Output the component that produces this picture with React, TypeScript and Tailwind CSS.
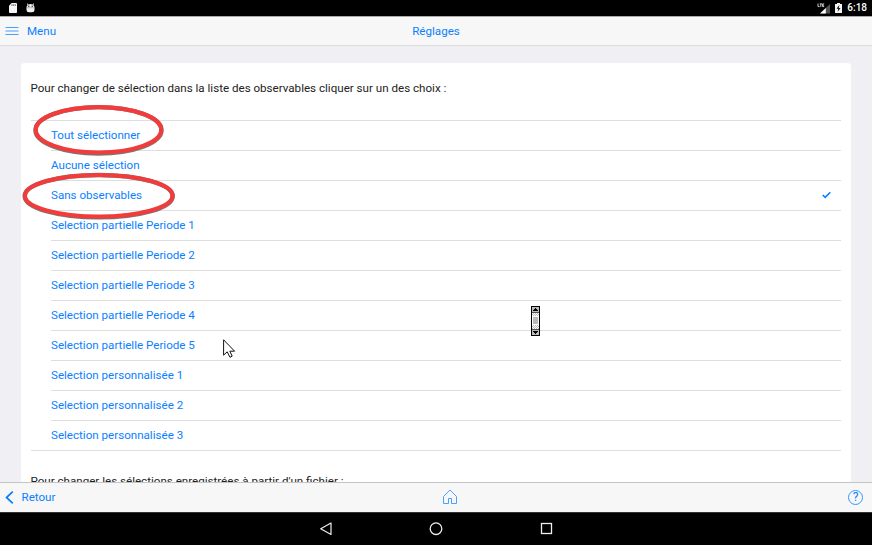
const choices = [
  'Tout sélectionner',
  'Aucune sélection',
  'Sans observables',
  'Selection partielle Periode 1',
  'Selection partielle Periode 2',
  'Selection partielle Periode 3',
  'Selection partielle Periode 4',
  'Selection partielle Periode 5',
  'Selection personnalisée 1',
  'Selection personnalisée 2',
  'Selection personnalisée 3',
];

function StatusBar() {
  return (
    <div className="flex h-4 shrink-0 items-center justify-between bg-black pr-[5px] pl-[9px] text-white">
      <div className="flex items-center gap-[9px]">
        <svg width="8" height="10" viewBox="0 0 8 10">
          <path d="M2.6 0H7.2Q8 0 8 .8V9.2Q8 10 7.2 10H.8Q0 10 0 9.2V2.7Z" fill="#f5f5f5" />
          <path d="M3 1.2V3M4.7 1.2V3M6.3 1.2V3" stroke="#555" strokeWidth=".8" />
        </svg>
        <svg width="9" height="10" viewBox="0 0 9 10">
          <path d="M1 0L2.5 1.5Q4.5.7 6.5 1.5L8 0L7.5 2.3Q8.5 3 8.5 4.5V7Q8.5 9.3 6 9.3H3Q.5 9.3 .5 7V4.5Q.5 3 1.5 2.3Z" fill="#eee" />
          <path d="M.5 4.7H8.5" stroke="#999" strokeWidth=".6" />
          <circle cx="2.8" cy="3.3" r=".7" fill="#222" />
          <circle cx="6.2" cy="3.3" r=".7" fill="#222" />
        </svg>
      </div>
      <div className="flex items-center">
        <svg width="13" height="11" viewBox="0 0 13 11" className="mr-[5px]">
          <path d="M13 1V10.5H3Z" fill="#555" />
          <path d="M8.8 5V10.5H3Z" fill="#fff" />
          <path d="M1 .5V3.6H2.6M2.7 .9H5M3.8 .9V4M7.2 .9H5.6V3.6H7.2M5.6 2.2H7" fill="none" stroke="#ddd" strokeWidth=".9" />
        </svg>
        <svg width="7" height="10" viewBox="0 0 7 10" className="mr-[5px] -mt-px">
          <path d="M2 0H5V1H7V10H0V1H2Z" fill="#f5f5f5" />
          <path d="M4.3 2L1.5 5.7H3.2L2.7 8.8L5.5 4.9H3.8Z" fill="#111" />
        </svg>
        <span className="text-[10px] leading-4 font-medium">6:18</span>
      </div>
    </div>
  );
}

function Header() {
  return (
    <header className="grid h-[30px] shrink-0 grid-cols-3 items-center border-t border-b border-t-[#aaa] border-b-[#dedee0] bg-[#f7f7f7] text-[11.6px] leading-4 text-[#0a80ff]">
      <div className="flex items-center gap-[8px] pl-[5px]">
        <svg width="14" height="10" viewBox="0 0 14 10">
          <path d="M.5 1.5H13.5M.5 5H13.5M.5 8.5H13.5" stroke="#49a0fb" strokeWidth="1" />
        </svg>
        <span>Menu</span>
      </div>
      <span className="text-center">Réglages</span>
    </header>
  );
}

function ChoiceList() {
  return (
    <ul className="mt-[24px] border-t border-b border-[#dedede] pl-[20.5px]">
      {choices.map((choice, i) => (
        <li
          key={choice}
          className="flex h-[30px] items-center justify-between border-b border-[#dedede] pr-[10px] pb-px text-[#0a80ff] last:h-[29px] last:border-b-0"
        >
          <span>{choice}</span>
          {i === 2 && (
            <svg width="9" height="8" viewBox="0 0 9 8">
              <path d="M.7 4L3.2 6.3L8.3 1.2" fill="none" stroke="#087eff" strokeWidth="1.6" />
            </svg>
          )}
        </li>
      ))}
    </ul>
  );
}

function Footer() {
  return (
    <footer className="grid h-[30px] shrink-0 grid-cols-[1fr_16px_1fr] items-center border-t border-[#c4c4c6] bg-[#f7f7f7] pb-px text-[11.6px] leading-4 text-[#0a80ff]">
      <div className="flex items-center gap-[7.5px] pl-[5px]">
        <svg width="9" height="13" viewBox="0 0 9 13">
          <path d="M7.8 .7L1.5 6.5L7.8 12.3" fill="none" stroke="#087eff" strokeWidth="1.7" />
        </svg>
        <span>Retour</span>
      </div>
      <svg width="16" height="16" viewBox="0 0 16 16" className="ml-[14px] overflow-visible">
        <path d="M1.5 7.5L8 1L14.5 7.5V14.5H9.5V9.5H6.5V14.5H1.5Z" fill="none" stroke="#3797fc" strokeWidth=".9" />
      </svg>
      <div className="flex justify-end pr-[9px]">
        <span className="flex size-[15px] items-center justify-center rounded-full border border-[#3797fc] text-[12px] leading-none">?</span>
      </div>
    </footer>
  );
}

function NavigationBar() {
  return (
    <nav className="flex h-[33px] shrink-0 items-center justify-center gap-[96px] border-t border-[#333] bg-black">
      <svg width="14" height="14" viewBox="0 0 14 14">
        <path d="M12 1V12.5L1.7 6.8Z" fill="none" stroke="#eee" strokeWidth="1.2" strokeLinejoin="round" />
      </svg>
      <svg width="14" height="14" viewBox="0 0 14 14">
        <circle cx="7" cy="6.7" r="5.8" fill="none" stroke="#eee" strokeWidth="1.3" />
      </svg>
      <svg width="14" height="14" viewBox="0 0 14 14">
        <rect x="2.5" y="1.5" width="10" height="10" fill="none" stroke="#eee" strokeWidth="1.3" />
      </svg>
    </nav>
  );
}

function Overlays() {
  return (
    <svg className="pointer-events-none absolute inset-0" width="872" height="545" viewBox="0 0 872 545">
      <defs>
        <pattern id="track" width="2" height="2" patternUnits="userSpaceOnUse">
          <rect width="2" height="2" fill="#fff" />
          <path d="M0 0H1V1H0ZM1 1H2V2H1Z" fill="#bbb" />
        </pattern>
      </defs>
      <g fill="none">
        <ellipse cx="98.5" cy="130.3" rx="63" ry="23.2" stroke="#777" strokeWidth="4.4" />
        <ellipse cx="98.5" cy="129.8" rx="62.8" ry="22.7" stroke="#f23c3c" strokeWidth="4.2" />
        <ellipse cx="98.7" cy="196.2" rx="74" ry="21.2" stroke="#777" strokeWidth="4.4" />
        <ellipse cx="98.7" cy="195.8" rx="73.8" ry="20.8" stroke="#f23c3c" strokeWidth="4.2" />
      </g>
      <g shapeRendering="crispEdges">
        <rect x="531" y="306" width="9" height="30" fill="#000" />
        <rect x="532" y="307" width="7" height="28" fill="url(#track)" />
        <rect x="532" y="307" width="7" height="5" fill="#bbb" />
        <rect x="532" y="312" width="7" height="1" fill="#555" />
        <rect x="532" y="329" width="7" height="1" fill="#555" />
        <rect x="532" y="330" width="7" height="5" fill="#bbb" />
        <rect x="532" y="316" width="7" height="9" fill="#fff" />
        <rect x="533" y="317" width="5" height="7" fill="#bbb" />
        <path d="M535 308H536V309H537V310H538V311H533V310H534V309H535ZM533 331H538V332H537V333H536V334H535V333H534V332H533Z" fill="#000" />
      </g>
      <path d="M223.6 339.8V355.2L227.2 351.8L230 357.3L232.2 356.1L229.8 351.2H234.6Z" fill="#fff" stroke="#111" strokeWidth="1" />
    </svg>
  );
}

export default function App() {
  return (
    <div className="relative flex h-[545px] w-[872px] flex-col overflow-hidden bg-[#efeff4] font-[Roboto,sans-serif]">
      <StatusBar />
      <Header />
      <main className="min-h-0 flex-1 overflow-hidden pt-[17px] pr-[21px] pl-[20.5px]">
        <section className="h-[480px] rounded-t-[4px] bg-white px-[10px] pt-[17px] text-[11.6px] leading-[16px] text-[#222]">
          <p>Pour changer de sélection dans la liste des observables cliquer sur un des choix :</p>
          <ChoiceList />
          <p className="mt-[22px]">Pour changer les sélections enregistrées à partir d'un fichier :</p>
        </section>
      </main>
      <Footer />
      <NavigationBar />
      <Overlays />
    </div>
  );
}
